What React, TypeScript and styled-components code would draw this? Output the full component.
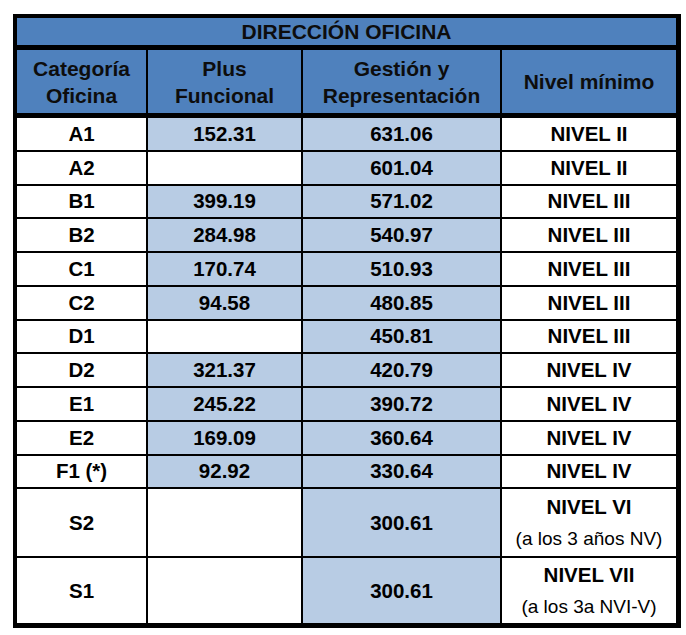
import React from 'react';
import styled, { createGlobalStyle } from 'styled-components';

type Row = {
  cat: string;
  plus?: string;
  gestion: string;
  nivel: string;
  note?: string;
};

const rows: Row[] = [
  { cat: 'A1', plus: '152.31', gestion: '631.06', nivel: 'NIVEL II' },
  { cat: 'A2', gestion: '601.04', nivel: 'NIVEL II' },
  { cat: 'B1', plus: '399.19', gestion: '571.02', nivel: 'NIVEL III' },
  { cat: 'B2', plus: '284.98', gestion: '540.97', nivel: 'NIVEL III' },
  { cat: 'C1', plus: '170.74', gestion: '510.93', nivel: 'NIVEL III' },
  { cat: 'C2', plus: '94.58', gestion: '480.85', nivel: 'NIVEL III' },
  { cat: 'D1', gestion: '450.81', nivel: 'NIVEL III' },
  { cat: 'D2', plus: '321.37', gestion: '420.79', nivel: 'NIVEL IV' },
  { cat: 'E1', plus: '245.22', gestion: '390.72', nivel: 'NIVEL IV' },
  { cat: 'E2', plus: '169.09', gestion: '360.64', nivel: 'NIVEL IV' },
  { cat: 'F1 (*)', plus: '92.92', gestion: '330.64', nivel: 'NIVEL IV' },
];

const special: Row[] = [
  { cat: 'S2', gestion: '300.61', nivel: 'NIVEL VI', note: '(a los 3 años NV)' },
  { cat: 'S1', gestion: '300.61', nivel: 'NIVEL VII', note: '(a los 3a NVI-V)' },
];

const App = () => {
  return (
    <>
      <GlobalStyle />
      <Table>
        <TitleRow>DIRECCIÓN OFICINA</TitleRow>

        <HeadRow>
          <HeadCell>Categoría<br />Oficina</HeadCell>
          <HeadCell>Plus<br />Funcional</HeadCell>
          <HeadCell>Gestión y<br />Representación</HeadCell>
          <HeadCell $last>Nivel mínimo</HeadCell>
        </HeadRow>

        {rows.map((r) => (
          <BodyRow key={r.cat} $height={33.75}>
            <Cell>{r.cat}</Cell>
            <Cell $shaded={!!r.plus}>{r.plus}</Cell>
            <Cell $shaded>{r.gestion}</Cell>
            <Cell $last>{r.nivel}</Cell>
          </BodyRow>
        ))}

        {special.map((r, i) => (
          <BodyRow key={r.cat} $height={i === 0 ? 69 : 64} $noBorder={i === special.length - 1}>
            <Cell>{r.cat}</Cell>
            <Cell />
            <Cell $shaded>{r.gestion}</Cell>
            <Cell $last $stack>
              <Line>{r.nivel}</Line>
              <Note>{r.note}</Note>
            </Cell>
          </BodyRow>
        ))}
      </Table>
    </>
  );
};

export default App;

const GlobalStyle = createGlobalStyle`
  body {
    margin: 0;
    background: #fff;
    font-family: "Liberation Sans", Arial, sans-serif;
  }
`;

const Table = styled.div`
  box-sizing: border-box;
  width: 668px;
  margin: 14px 0 0 13px;
  border-style: solid;
  border-color: #000;
  border-width: 4px 5px 6px 4px;
  color: #000;
  font-weight: bold;
  font-size: 20.5px;
`;

const TitleRow = styled.div`
  box-sizing: border-box;
  height: 32px;
  border-bottom: 5px solid #000;
  background: #4f81bd;
  color: #0d0d0d;
  font-size: 21px;
  display: flex;
  align-items: center;
  justify-content: center;
  padding-top: 1px;
`;

const Columns = styled.div`
  box-sizing: border-box;
  display: grid;
  grid-template-columns: 131px 155px 199px 1fr;
`;

const HeadRow = styled(Columns)`
  height: 68px;
  border-bottom: 5px solid #000;
  background: #4f81bd;
`;

const HeadCell = styled.div<{ $last?: boolean }>`
  box-sizing: border-box;
  border-right: ${(p) => (p.$last ? 'none' : '2px solid #000')};
  display: flex;
  align-items: center;
  justify-content: center;
  text-align: center;
  font-size: 21px;
  line-height: 27px;
  color: #0d0d0d;
`;

const BodyRow = styled(Columns)<{ $height: number; $noBorder?: boolean }>`
  height: ${(p) => p.$height}px;
  border-bottom: ${(p) => (p.$noBorder ? 'none' : '2px solid #000')};
`;

const Cell = styled.div<{ $shaded?: boolean; $last?: boolean; $stack?: boolean }>`
  box-sizing: border-box;
  background: ${(p) => (p.$shaded ? '#b8cce4' : '#fff')};
  border-right: ${(p) => (p.$last ? 'none' : '2px solid #000')};
  display: flex;
  flex-direction: ${(p) => (p.$stack ? 'column' : 'row')};
  align-items: center;
  justify-content: center;
  white-space: nowrap;
`;

const Line = styled.div`
  line-height: 33px;
`;

const Note = styled.div`
  font-weight: normal;
  font-size: 19px;
  line-height: 32px;
`;
